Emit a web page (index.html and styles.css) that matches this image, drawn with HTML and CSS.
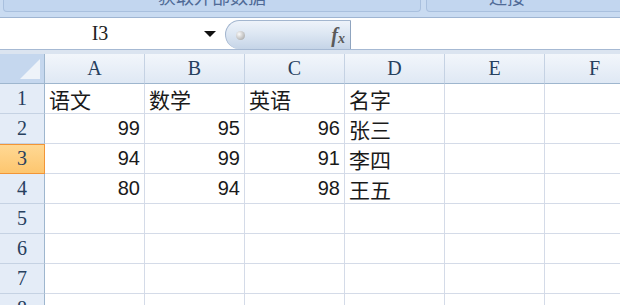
FILE: index.html
```html
<!DOCTYPE html>
<html lang="zh-CN">
<head>
  <meta charset="UTF-8">
  <link rel="stylesheet" href="styles.css">
</head>
<body>

<div class="ribbon">
  <div class="group group-wide"><span>获取外部数据</span></div>
  <div class="group group-link"><span>连接</span></div>
</div>

<div class="formula-bar">
  <div class="name-box">
    <span class="name">I3</span>
    <span class="arrow"></span>
  </div>
  <div class="pill">
    <span class="dot"></span>
    <span class="fx">f<sub>x</sub></span>
  </div>
  <div class="formula-input"></div>
</div>

<div class="sheet">
  <div class="corner"><span class="tri"></span></div>
  <div class="col-head">A</div>
  <div class="col-head">B</div>
  <div class="col-head">C</div>
  <div class="col-head">D</div>
  <div class="col-head">E</div>
  <div class="col-head">F</div>

  <div class="row-head">1</div>
  <div class="cell txt">语文</div>
  <div class="cell txt">数学</div>
  <div class="cell txt">英语</div>
  <div class="cell txt">名字</div>
  <div class="cell"></div>
  <div class="cell"></div>

  <div class="row-head">2</div>
  <div class="cell num">99</div>
  <div class="cell num">95</div>
  <div class="cell num">96</div>
  <div class="cell txt">张三</div>
  <div class="cell"></div>
  <div class="cell"></div>

  <div class="row-head active">3</div>
  <div class="cell num">94</div>
  <div class="cell num">99</div>
  <div class="cell num">91</div>
  <div class="cell txt">李四</div>
  <div class="cell"></div>
  <div class="cell"></div>

  <div class="row-head">4</div>
  <div class="cell num">80</div>
  <div class="cell num">94</div>
  <div class="cell num">98</div>
  <div class="cell txt">王五</div>
  <div class="cell"></div>
  <div class="cell"></div>

  <div class="row-head">5</div>
  <div class="cell"></div>
  <div class="cell"></div>
  <div class="cell"></div>
  <div class="cell"></div>
  <div class="cell"></div>
  <div class="cell"></div>

  <div class="row-head">6</div>
  <div class="cell"></div>
  <div class="cell"></div>
  <div class="cell"></div>
  <div class="cell"></div>
  <div class="cell"></div>
  <div class="cell"></div>

  <div class="row-head">7</div>
  <div class="cell"></div>
  <div class="cell"></div>
  <div class="cell"></div>
  <div class="cell"></div>
  <div class="cell"></div>
  <div class="cell"></div>

  <div class="row-head">8</div>
  <div class="cell"></div>
  <div class="cell"></div>
  <div class="cell"></div>
  <div class="cell"></div>
  <div class="cell"></div>
  <div class="cell"></div>
</div>

</body>
</html>
```

FILE: styles.css
```css
body {
  margin: 0;
  width: 620px;
  height: 305px;
  overflow: hidden;
  background: #fff;
  font-family: "Liberation Sans", "Noto Sans CJK SC", sans-serif;
}

/* ribbon strip at the top */
.ribbon {
  display: flex;
  gap: 5px;
  height: 12px;
  padding: 0 0 5px 3px;
  background: #c9dbf1;
  border-bottom: 1px solid #9fb5d2;
  overflow: hidden;
}

.group {
  width: 420px;
  flex-shrink: 0;
  display: flex;
  justify-content: center;
  align-items: flex-end;
  background: #c2d6ef;
  border: 1px solid #a9c0de;
  border-top: none;
  border-radius: 0 0 4px 4px;
  overflow: hidden;
}

.group-wide {
  width: 416px;
}

.group-link {
  justify-content: flex-start;
  padding-left: 62px;
}

.group span {
  font-size: 18px;
  line-height: 18px;
  margin-bottom: 4px;
  color: #4f6a96;
}

/* name box + formula */
.formula-bar {
  display: flex;
  height: 31px;
  background: #fff;
  border-bottom: 1px solid #a6b9d3;
}

.name-box {
  width: 225px;
  display: flex;
  align-items: center;
}

.name {
  flex: 1;
  text-align: center;
  padding-right: 4px;
  font-family: "Liberation Serif", serif;
  font-size: 20px;
  color: #222;
}

.arrow {
  width: 0;
  height: 0;
  margin-right: 9px;
  border-left: 6px solid transparent;
  border-right: 6px solid transparent;
  border-top: 6px solid #111;
}

.pill {
  width: 124px;
  margin-top: 2px;
  display: flex;
  align-items: center;
  justify-content: space-between;
  border: 1px solid #a3b6cf;
  border-bottom: none;
  border-right-color: #8fa4bf;
  border-radius: 16px 0 0 16px;
  background: linear-gradient(to bottom, #eef3fa 0%, #dde7f3 45%, #c5d4e7 100%);
}

.dot {
  width: 9px;
  height: 9px;
  margin-left: 10px;
  border-radius: 50%;
  background: radial-gradient(circle at 35% 35%, #fafafa, #9a9a9a);
}

.fx {
  margin-right: 5px;
  font-family: "Liberation Serif", serif;
  font-style: italic;
  font-weight: bold;
  font-size: 20px;
  color: #5a5a5a;
}

.fx sub {
  font-size: 14px;
  vertical-align: -1px;
}

.formula-input {
  flex: 1;
  background: #fff;
}

/* grid */
.sheet {
  display: grid;
  grid-template-columns: 45px repeat(6, 100px);
  grid-auto-rows: 30px;
  border-top: 4px solid #dbe4f0;
  box-shadow: inset 0 1px 0 #b9c9de;
}

.corner {
  position: relative;
  background: #c5d7ee;
  border-right: 1px solid #9eb6ce;
  border-bottom: 1px solid #9eb6ce;
}

.tri {
  position: absolute;
  right: 4px;
  bottom: 4px;
  width: 0;
  height: 0;
  border-left: 20px solid transparent;
  border-bottom: 20px solid #eef3f9;
}

.col-head {
  display: flex;
  align-items: center;
  justify-content: center;
  background: linear-gradient(to bottom, #f2f6fb, #dfe8f4);
  border-right: 1px solid #c5d2e3;
  border-bottom: 1px solid #9eb6ce;
  font-family: "Liberation Serif", serif;
  font-size: 20px;
  color: #27405e;
}

.row-head {
  display: flex;
  align-items: center;
  justify-content: center;
  background: #e4ecf7;
  border-right: 1px solid #9eb6ce;
  border-bottom: 1px solid #c5d2e3;
  font-family: "Liberation Serif", serif;
  font-size: 20px;
  color: #27405e;
}

.row-head.active {
  background: linear-gradient(to bottom, #ffd995, #fdc66f);
  border-right-color: #f29536;
  border-bottom-color: #f29536;
  box-shadow: inset 0 1px 0 #f29536;
}

.cell {
  display: flex;
  align-items: center;
  border-right: 1px solid #d4dbe8;
  border-bottom: 1px solid #d4dbe8;
  font-size: 20px;
  color: #1a1a1a;
}

.cell.num {
  justify-content: flex-end;
  padding-right: 4px;
}

.cell.txt {
  padding-left: 4px;
  font-family: "Noto Sans CJK SC", sans-serif;
  font-size: 21px;
}
```
